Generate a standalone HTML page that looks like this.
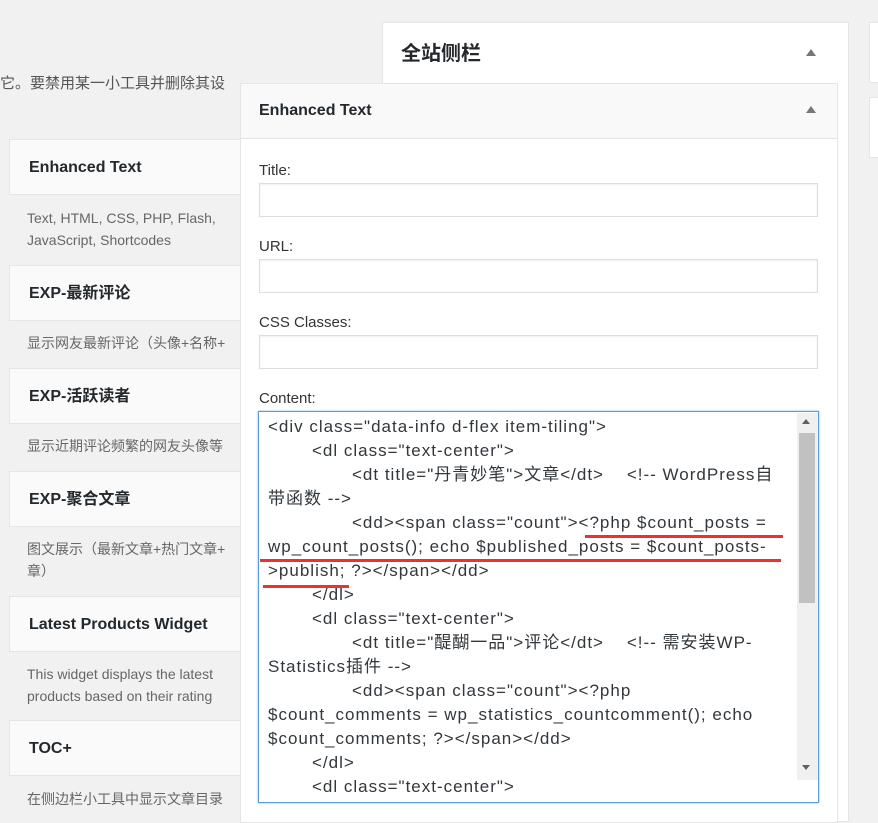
<!DOCTYPE html>
<html><head><meta charset="utf-8"><style>
*{margin:0;padding:0;box-sizing:border-box}
body{width:878px;height:811px;overflow:hidden;background:#f1f1f1;position:relative;font-family:"Liberation Sans","Noto Sans CJK SC",sans-serif;color:#23282d}
.a{position:absolute;white-space:nowrap}
.card{position:absolute;left:9px;width:240px;height:56px;background:#fafafa;border:1px solid #e5e5e5;font-weight:bold;font-size:16px;line-height:20px;padding:18px 0 0 19px}
.desc{position:absolute;left:27px;font-size:14px;color:#666;line-height:22px;white-space:nowrap}
.lbl{position:absolute;left:259px;font-size:15px;color:#333;line-height:20px}
.inp{position:absolute;left:259px;width:559px;height:34px;border:1px solid #ddd;background:#fff;box-shadow:inset 0 1px 2px rgba(0,0,0,.07)}
.tri{position:absolute;width:0;height:0;border-left:5px solid transparent;border-right:5px solid transparent;border-bottom:7px solid #72777c}
.ln{position:absolute;font-size:17px;line-height:22px;color:#32373c;white-space:nowrap;letter-spacing:1px}
.red{position:absolute;height:3px;background:#f03030}
</style></head><body>
<div class="a" style="left:0;top:74px;font-size:15px;line-height:20px;color:#555">它。要禁用某一小工具并删除其设</div>

<div class="card" style="top:139px">Enhanced Text</div>
<div class="desc" style="top:207px">Text, HTML, CSS, PHP, Flash,<br>JavaScript, Shortcodes</div>
<div class="card" style="top:265px">EXP-最新评论</div>
<div class="desc" style="top:332px">显示网友最新评论（头像+名称+</div>
<div class="card" style="top:368px">EXP-活跃读者</div>
<div class="desc" style="top:435px">显示近期评论频繁的网友头像等</div>
<div class="card" style="top:471px">EXP-聚合文章</div>
<div class="desc" style="top:538px">图文展示（最新文章+热门文章+<br>章）</div>
<div class="card" style="top:596px">Latest Products Widget</div>
<div class="desc" style="top:663px">This widget displays the latest<br>products based on their rating</div>
<div class="card" style="top:720px">TOC+</div>
<div class="desc" style="top:788px">在侧边栏小工具中显示文章目录</div>

<div class="a" style="left:382px;top:22px;width:467px;height:800px;background:#fff;border:1px solid #e5e5e5"></div>
<div class="a" style="left:401px;top:42px;font-size:20px;line-height:24px;font-weight:bold">全站侧栏</div>
<div class="tri" style="left:806px;top:49px"></div>

<div class="a" style="left:869px;top:22px;width:20px;height:61px;background:#fff;border:1px solid #e5e5e5"></div>
<div class="a" style="left:869px;top:97px;width:20px;height:61px;background:#fff;border:1px solid #e5e5e5"></div>

<div class="a" style="left:240px;top:83px;width:598px;height:740px;background:#fff;border:1px solid #e5e5e5"></div>
<div class="a" style="left:240px;top:83px;width:598px;height:56px;background:#f9f9f9;border:1px solid #e5e5e5"></div>
<div class="a" style="left:259px;top:101px;font-size:16px;line-height:20px;font-weight:bold">Enhanced Text</div>
<div class="tri" style="left:806px;top:106px"></div>

<div class="lbl" style="top:161px">Title:</div>
<div class="inp" style="top:183px"></div>
<div class="lbl" style="top:237px">URL:</div>
<div class="inp" style="top:259px"></div>
<div class="lbl" style="top:313px">CSS Classes:</div>
<div class="inp" style="top:335px"></div>
<div class="lbl" style="top:389px">Content:</div>
<div class="a" style="left:258px;top:411px;width:561px;height:392px;border:1px solid #5b9dd9;background:#fff;box-shadow:0 0 2px rgba(30,140,190,.6)"></div>

<div class="ln" style="left:268px;top:416px">&lt;div class="data-info d-flex item-tiling"&gt;</div>
<div class="ln" style="left:312px;top:440px">&lt;dl class="text-center"&gt;</div>
<div class="ln" style="left:352px;top:464px">&lt;dt title="丹青妙笔"&gt;文章&lt;/dt&gt;&nbsp;&nbsp;&nbsp;&nbsp;&lt;!-- WordPress自</div>
<div class="ln" style="left:268px;top:488px">带函数 --&gt;</div>
<div class="ln" style="left:352px;top:512px">&lt;dd&gt;&lt;span class="count"&gt;&lt;?php $count_posts =</div>
<div class="ln" style="left:268px;top:536px">wp_count_posts(); echo $published_posts = $count_posts-</div>
<div class="ln" style="left:268px;top:560px">&gt;publish; ?&gt;&lt;/span&gt;&lt;/dd&gt;</div>
<div class="ln" style="left:312px;top:584px">&lt;/dl&gt;</div>
<div class="ln" style="left:312px;top:608px">&lt;dl class="text-center"&gt;</div>
<div class="ln" style="left:352px;top:632px">&lt;dt title="醍醐一品"&gt;评论&lt;/dt&gt;&nbsp;&nbsp;&nbsp;&nbsp;&lt;!-- 需安装WP-</div>
<div class="ln" style="left:268px;top:656px">Statistics插件 --&gt;</div>
<div class="ln" style="left:352px;top:680px">&lt;dd&gt;&lt;span class="count"&gt;&lt;?php</div>
<div class="ln" style="left:268px;top:704px">$count_comments = wp_statistics_countcomment(); echo</div>
<div class="ln" style="left:268px;top:728px">$count_comments; ?&gt;&lt;/span&gt;&lt;/dd&gt;</div>
<div class="ln" style="left:312px;top:752px">&lt;/dl&gt;</div>
<div class="ln" style="left:312px;top:776px">&lt;dl class="text-center"&gt;</div>

<div class="a" style="left:797px;top:413px;width:21px;height:388px;background:#f0f0f0"></div>
<div class="a" style="left:799px;top:433px;width:16px;height:170px;background:#c1c1c1"></div>
<div class="tri" style="left:802px;top:419px;border-left-width:4px;border-right-width:4px;border-bottom-width:5px;border-bottom-color:#606060"></div>
<div class="tri" style="left:802px;top:765px;border-left-width:4px;border-right-width:4px;border-bottom:0;border-top:5px solid #606060"></div>
<div class="a" style="left:797px;top:780px;width:21px;height:21px;background:#fff"></div>

<div class="red" style="left:585px;top:535px;width:198px"></div>
<div class="red" style="left:260px;top:559px;width:521px"></div>
<div class="red" style="left:263px;top:585px;width:86px"></div>
</body></html>
